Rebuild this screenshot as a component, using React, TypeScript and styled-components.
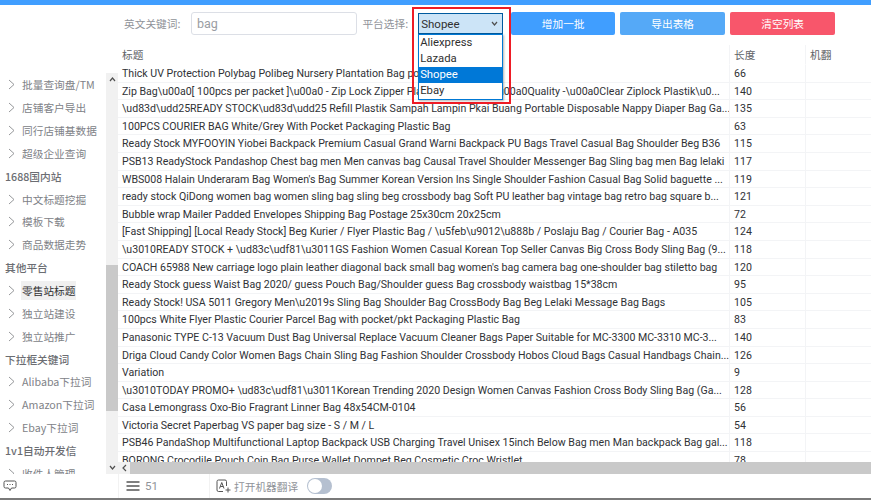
import React from "react";
import styled, { createGlobalStyle } from "styled-components";

const Global = createGlobalStyle`
  html, body { margin: 0; padding: 0; width: 871px; height: 500px; overflow: hidden; background: #fff; }
  * { box-sizing: border-box; }
  body { font-family: Roboto, "Noto Sans CJK SC", sans-serif; }
`;
const Page = styled.div`position: relative; width: 871px; height: 500px; display: flex; flex-direction: column; overflow: hidden; background: #fff;`;
const TopBar = styled.div`height: 5px; background: #409eff; flex: none;`;
const Body = styled.div`flex: 1; display: flex; min-height: 0;`;
const Side = styled.div`width: 106px; flex: none; overflow: hidden; padding-top: 68.5px;`;
const SideItem = styled.div<{ $active?: boolean }>`
  height: 22.85px; display: flex; align-items: center; padding-left: 8px; gap: 7px; flex: none;
  font: 10.7px "Noto Sans CJK SC", sans-serif; color: ${p => (p.$active ? "#303133" : "#808287")};
`;
const SideLabel = styled.span<{ $active?: boolean }>`
  padding: 2px 1px; margin-left: -1px; white-space: nowrap; background: ${p => (p.$active ? "#f0f0f0" : "transparent")};
`;
const SideHead = styled.div`
  height: 22.85px; display: flex; align-items: center; padding-left: 5px;
  font: 500 10.7px "Noto Sans CJK SC", sans-serif; color: #6b6d72; white-space: nowrap;
`;
const VBar = styled.div`width: 12px; flex: none; background: #f1f1f1; margin-top: 68px; position: relative; display: flex; flex-direction: column; align-items: center; justify-content: space-between; padding: 4px 0;`;
const VThumb = styled.div`position: absolute; left: 0; right: 0; top: 192px; height: 146px; background: #c9c9c9;`;
const Main = styled.div`flex: 1; min-width: 0; display: flex; flex-direction: column;`;
const Toolbar = styled.div`height: 29px; margin-top: 7px; display: flex; align-items: stretch; padding-left: 6px; flex: none;`;
const FieldLabel = styled.div<{ $ml?: number }>`font: 10.7px "Noto Sans CJK SC", sans-serif; color: #909399; display: flex; align-items: center; height: 23px; white-space: nowrap; margin-left: ${p => p.$ml ?? 0}px;`;
const Input = styled.div`
  width: 166px; height: 23px; margin-left: 10.5px; border: 1px solid #dcdfe6; border-radius: 3px; padding-left: 5px;
  display: flex; align-items: center; font-size: 12.5px; color: #9a9da3; align-self: flex-start;
`;
const Select = styled.div`
  width: 85px; height: 21px; margin-left: 10px; margin-top: 1px; background: #cce4f7; border: 1px solid #005a9e;
  display: flex; align-items: center; justify-content: space-between; padding: 0 4px 0 2px;
  font-size: 11.5px; color: #303030; position: relative;
`;
const Btn = styled.div<{ $bg: string; $w: number; $ml: number }>`
  width: ${p => p.$w}px; height: 23px; margin-left: ${p => p.$ml}px; background: ${p => p.$bg}; border-radius: 2px;
  color: #fff; font: 10.7px "Noto Sans CJK SC", sans-serif; display: flex; align-items: center; justify-content: center;
`;
const Drop = styled.div`
  position: absolute; left: -1px; top: 20px; width: 85px; background: #fff; border: 1px solid #0078d4;
  box-shadow: 1px 1px 2px rgba(0,0,0,.3); z-index: 5;
`;
const DropItem = styled.div<{ $sel?: boolean }>`
  height: 16px; line-height: 16px; padding-left: 1px; font-size: 11.3px;
  background: ${p => (p.$sel ? "#0078d7" : "#fff")}; color: ${p => (p.$sel ? "#fff" : "#303030")};
`;
const Frame = styled.div`position: absolute; left: 412px; top: 7px; width: 99px; height: 97px; border: 2px solid #ee1c25; z-index: 6; pointer-events: none;`;
const TableWrap = styled.div`flex: 1; min-height: 0; position: relative; overflow: hidden; margin-top: 4px;`;
const Grid = styled.div`display: grid; grid-template-columns: 611px 76px 66px;`;
const Cell = styled.div<{ $head?: boolean; $sep?: boolean }>`
  height: ${p => (p.$head ? "20px" : "17.6px")}; line-height: ${p => (p.$head ? "20px" : "17px")};
  padding: 0 4px; font-size: ${p => (p.$head ? "10.7px" : "10.6px")}; color: ${p => (p.$head ? "#606266" : "#303236")};
  white-space: nowrap; overflow: hidden;
  border-bottom: 1px solid ${p => (p.$head ? "transparent" : "#f3f4f6")};
  border-left: ${p => (p.$sep ? "1px solid #f3f4f6" : "none")};
  font-family: ${p => (p.$head ? '"Noto Sans CJK SC", sans-serif' : 'Roboto, sans-serif')};
`;
const HBar = styled.div`position: absolute; left: 0; right: 0; bottom: 0; height: 12px; background: #f1f1f1; display: flex; align-items: center; z-index: 2;`;
const HArrow = styled.div`width: 12px; flex: none; display: flex; justify-content: center;`;
const HThumb = styled.div`flex: 1; height: 12px; background: #c9c9c9;`;
const Footer = styled.div`height: 24px; flex: none; display: flex; align-items: center;`;
const FootLeft = styled.div`width: 118px; height: 100%; flex: none; display: flex; align-items: center; padding-left: 3px;`;
const FootCount = styled.div`width: 91px; height: 100%; flex: none; display: flex; align-items: center; gap: 5px; padding-left: 7px; border-left: 1px solid #f2f2f2; font-size: 11.5px; color: #909399;`;
const FootTrans = styled.div`height: 100%; display: flex; align-items: center; padding-left: 6px; border-left: 1px solid #f2f2f2; font: 10.7px "Noto Sans CJK SC", sans-serif; color: #909399;`;
const Toggle = styled.div`width: 25px; height: 16px; margin-left: 9px; border-radius: 8px; background: #b5c0d0; position: relative;`;
const Knob = styled.div`position: absolute; left: 1px; top: 1px; width: 14px; height: 14px; border-radius: 50%; background: #fff;`;
const BottomLine = styled.div`height: 2px; background: #7a7a7a; flex: none;`;

const Chevron = () => (
  <svg width="7" height="11" viewBox="0 0 7 11" fill="none" stroke="#8a8c90" strokeWidth="0.9"><path d="M1 1l5 4.5L1 10" /></svg>
);
const Caret = ({ up }: { up?: boolean }) => (
  <svg width="7" height="5" viewBox="0 0 7 5" fill="none" stroke="#505050" strokeWidth="1.2"><path d={up ? "M1 4l2.5-3L6 4" : "M1 1l2.5 3L6 1"} /></svg>
);

type N = { t: string; k?: "h" | "a" };
const nav: N[] = [
  { t: "批量查询盘/TM" }, { t: "店铺客户导出" }, { t: "同行店铺基数据" }, { t: "超级企业查询" },
  { t: "1688国内站", k: "h" }, { t: "中文标题挖掘" }, { t: "模板下载" }, { t: "商品数据走势" },
  { t: "其他平台", k: "h" }, { t: "零售站标题", k: "a" }, { t: "独立站建设" }, { t: "独立站推广" },
  { t: "下拉框关键词", k: "h" }, { t: "Alibaba下拉词" }, { t: "Amazon下拉词" }, { t: "Ebay下拉词" },
  { t: "1v1自动开发信", k: "h" }, { t: "收件人管理" },
];
const rows: [string, string][] = [
  ["Thick UV Protection Polybag Polibeg Nursery Plantation Bag polybag", "66"],
  ["Zip Bag\\u00a0[ 100pcs per packet ]\\u00a0 - Zip Lock Zipper Plastic Bag\\u00a0\\u00a0Quality -\\u00a0Clear Ziplock Plastik\\u0...", "140"],
  ["\\ud83d\\udd25READY STOCK\\ud83d\\udd25 Refill Plastik Sampah Lampin Pkai Buang Portable Disposable Nappy Diaper Bag Ga...", "135"],
  ["100PCS COURIER BAG White/Grey With Pocket Packaging Plastic Bag", "63"],
  ["Ready Stock MYFOOYIN Yiobei Backpack Premium Casual Grand Warni Backpack PU Bags Travel Casual Bag Shoulder Beg B36", "115"],
  ["PSB13 ReadyStock Pandashop Chest bag men Men canvas bag Causal Travel Shoulder Messenger Bag Sling bag men Bag lelaki", "117"],
  ["WBS008 Halain Underaram Bag Women's Bag Summer Korean Version Ins Single Shoulder Fashion Casual Bag Solid baguette ...", "119"],
  ["ready stock QiDong women bag women sling bag sling beg crossbody bag Soft PU leather bag vintage bag retro bag square b...", "121"],
  ["Bubble wrap Mailer Padded Envelopes Shipping Bag Postage 25x30cm 20x25cm", "72"],
  ["[Fast Shipping] [Local Ready Stock]  Beg Kurier / Flyer Plastic Bag / \\u5feb\\u9012\\u888b / Poslaju Bag / Courier Bag  - A035", "124"],
  ["\\u3010READY STOCK + \\ud83c\\udf81\\u3011GS Fashion Women Casual Korean Top Seller Canvas Big Cross Body Sling Bag (9...", "118"],
  ["COACH 65988 New carriage logo plain leather diagonal back small bag women's bag camera bag one-shoulder bag stiletto bag", "120"],
  ["Ready Stock guess Waist Bag 2020/ guess Pouch Bag/Shoulder guess Bag crossbody waistbag 15*38cm", "95"],
  ["Ready Stock! USA 5011 Gregory Men\\u2019s Sling Bag Shoulder Bag CrossBody Bag Beg Lelaki Message Bag Bags", "105"],
  ["100pcs White Flyer Plastic Courier Parcel Bag with pocket/pkt Packaging Plastic Bag", "83"],
  ["Panasonic TYPE C-13 Vacuum Dust Bag Universal Replace Vacuum Cleaner Bags Paper Suitable for MC-3300 MC-3310 MC-3...", "140"],
  ["Driga Cloud Candy Color Women Bags Chain Sling Bag Fashion Shoulder Crossbody Hobos Cloud Bags Casual Handbags Chain...", "126"],
  ["Variation", "9"],
  ["\\u3010TODAY PROMO+ \\ud83c\\udf81\\u3011Korean Trending 2020 Design Women Canvas Fashion Cross Body Sling Bag (Ga...", "128"],
  ["Casa Lemongrass Oxo-Bio Fragrant Linner Bag 48x54CM-0104", "56"],
  ["Victoria Secret Paperbag VS paper bag size - S / M / L", "54"],
  ["PSB46 PandaShop Multifunctional Laptop Backpack USB Charging Travel Unisex 15inch Below Bag men Man backpack Bag gal...", "118"],
  ["BORONG Crocodile Pouch Coin Bag Purse Wallet Dompet Beg Cosmetic Croc Wristlet", "78"],
];

export default function App() {
  return (
    <Page>
      <Global />
      <TopBar />
      <Body>
        <Side>
          {nav.map(n =>
            n.k === "h" ? (
              <SideHead key={n.t}>{n.t}</SideHead>
            ) : (
              <SideItem key={n.t} $active={n.k === "a"}>
                <Chevron />
                <SideLabel $active={n.k === "a"}>{n.t}</SideLabel>
              </SideItem>
            )
          )}
        </Side>
        <VBar>
          <Caret up />
          <VThumb />
          <Caret />
        </VBar>
        <Main>
          <Toolbar>
            <FieldLabel>英文关键词:</FieldLabel>
            <Input>bag</Input>
            <FieldLabel $ml={5.5}>平台选择:</FieldLabel>
            <div>
              <Select>
                Shopee
                <Caret />
                <Drop>
                  <DropItem>Aliexpress</DropItem>
                  <DropItem>Lazada</DropItem>
                  <DropItem $sel>Shopee</DropItem>
                  <DropItem>Ebay</DropItem>
                </Drop>
              </Select>
            </div>
            <Btn $bg="#409eff" $w={104} $ml={8}>增加一批</Btn>
            <Btn $bg="#55a9f7" $w={105} $ml={5}>导出表格</Btn>
            <Btn $bg="#f8566b" $w={105} $ml={5}>清空列表</Btn>
          </Toolbar>
          <TableWrap>
            <Grid>
              <Cell $head>标题</Cell>
              <Cell $head $sep>长度</Cell>
              <Cell $head $sep>机翻</Cell>
              {rows.map(([t, l]) => (
                <React.Fragment key={t}>
                  <Cell>{t}</Cell>
                  <Cell $sep>{l}</Cell>
                  <Cell $sep />
                </React.Fragment>
              ))}
            </Grid>
            <HBar>
              <HArrow>
                <svg width="5" height="8" viewBox="0 0 5 8" fill="none" stroke="#505050" strokeWidth="1.2"><path d="M4 1L1 4l3 3" /></svg>
              </HArrow>
              <HThumb />
            </HBar>
          </TableWrap>
        </Main>
      </Body>
      <Footer>
        <FootLeft>
          <svg width="14" height="12" viewBox="0 0 14 12" fill="none" stroke="#555" strokeWidth="1">
            <path d="M2.5 1h9A1.5 1.5 0 0 1 13 2.5v4A1.5 1.5 0 0 1 11.500 8H8.500L7 10.500 5.500 8h-3A1.5 1.5 0 0 1 1 6.500v-4A1.500 1.500 0 0 1 2.500 1z" />
            <path d="M4 4.500h1M6.500 4.500h1M9 4.500h1" />
          </svg>
        </FootLeft>
        <FootCount>
          <svg width="14" height="10" viewBox="0 0 14 10" stroke="#555" strokeWidth="1.300"><path d="M0.500 1h13M0.500 5h13M0.500 9h13" /></svg>
          51
        </FootCount>
        <FootTrans>
          <svg width="15" height="14" viewBox="0 0 15 14" fill="none" stroke="#555" strokeWidth="1" style={{ marginRight: 3 }}>
            <path d="M7 12.500H2.500A1.500 1.500 0 0 1 1 11V2.500A1.500 1.500 0 0 1 2.500 1H9A1.500 1.500 0 0 1 10.500 2.500V7" />
            <path d="M3.500 9.500L5.750 3.500 8 9.500M4.300 7.500h3" />
            <path d="M12 8.500v5M9.500 11h5" />
          </svg>
          打开机器翻译
          <Toggle><Knob /></Toggle>
        </FootTrans>
      </Footer>
      <BottomLine />
      <Frame />
    </Page>
  );
}
